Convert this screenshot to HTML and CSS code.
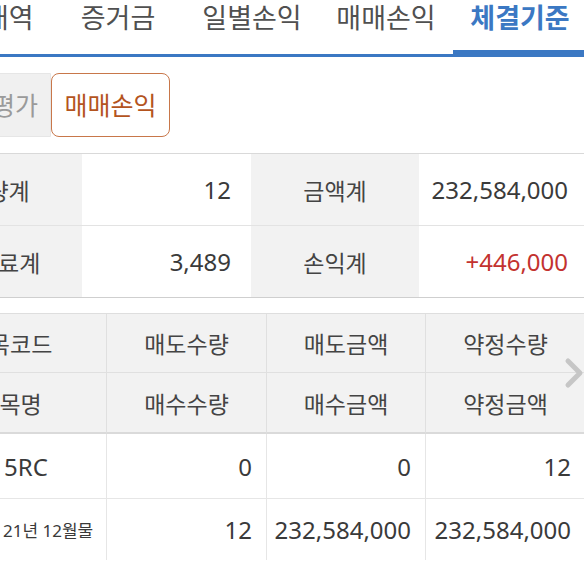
FILE: index.html
```html
<!DOCTYPE html>
<html lang="ko">
<head>
<meta charset="utf-8">
<link rel="stylesheet" href="styles.css">
</head>
<body>
<div class="viewport">
  <div class="page">
    <nav class="tabs">
      <div class="tab">거래내역</div>
      <div class="tab">증거금</div>
      <div class="tab">일별손익</div>
      <div class="tab">매매손익</div>
      <div class="tab active">체결기준</div>
    </nav>

    <div class="segment">
      <div class="seg">잔고평가</div>
      <div class="seg on">매매손익</div>
    </div>

    <div class="summary">
      <div class="s-label">수량계</div>
      <div class="s-value">12</div>
      <div class="s-label">금액계</div>
      <div class="s-value">232,584,000</div>
      <div class="s-label last">수수료계</div>
      <div class="s-value last">3,489</div>
      <div class="s-label last">손익계</div>
      <div class="s-value last plus">+446,000</div>
    </div>

    <div class="grid">
      <div class="g-head">종목코드</div>
      <div class="g-head">매도수량</div>
      <div class="g-head">매도금액</div>
      <div class="g-head">약정수량</div>
      <div class="g-head h2">종목명</div>
      <div class="g-head h2">매수수량</div>
      <div class="g-head h2">매수금액</div>
      <div class="g-head h2">약정금액</div>

      <div class="g-cell name">5RC</div>
      <div class="g-cell">0</div>
      <div class="g-cell">0</div>
      <div class="g-cell">12</div>
      <div class="g-cell name small r2">21년 12월물</div>
      <div class="g-cell r2">12</div>
      <div class="g-cell r2">232,584,000</div>
      <div class="g-cell r2">232,584,000</div>
    </div>
  </div>

  <svg class="chevron" width="22" height="32" viewBox="0 0 22 32" aria-hidden="true">
    <polyline points="4,4 16,16 4,28" fill="none" stroke="#c6c6c6" stroke-width="5" stroke-linecap="round" stroke-linejoin="round"/>
  </svg>
</div>
</body>
</html>
```

FILE: styles.css
```css
* { box-sizing: border-box; }

html, body {
  margin: 0;
  padding: 0;
  background: #ffffff;
}

body {
  font-family: "Noto Sans", "Noto Sans CJK KR", sans-serif;
  color: #3a3a3a;
}

.viewport {
  position: relative;
  width: 584px;
  height: 562px;
  overflow: hidden;
}

.page {
  margin-left: -86px;
  width: 760px;
}

/* Tabs */
.tabs {
  display: flex;
  margin-left: 3px;
  border-bottom: 3px solid #3b78c3;
  width: 760px;
}

.tab {
  flex: 0 0 134px;
  height: 54px;
  padding-bottom: 18px;
  line-height: 36px;
  text-align: center;
  font-size: 27px;
  color: #505050;
  white-space: nowrap;
}

.tab.active {
  color: #3b78c3;
  font-weight: 700;
  box-shadow: inset 0 -4px 0 #3b78c3;
}

/* Segment buttons */
.segment {
  display: flex;
  margin-top: 16px;
  margin-left: 19px;
}

.seg {
  height: 64px;
  line-height: 62px;
  padding: 0 8px;
  font-size: 25px;
  color: #9a9a9a;
  background: #f0f0f0;
  border: 1px solid #e6e6e6;
  border-radius: 8px 0 0 8px;
  width: 118px;
  text-align: center;
  white-space: nowrap;
}

.seg.on {
  width: 119px;
  color: #b4541e;
  background: #ffffff;
  border: 1.5px solid #c8774a;
  border-radius: 8px;
}

/* Summary table */
.summary {
  display: grid;
  grid-template-columns: 168px 169px 168px 169px;
  margin-top: 16px;
  border-top: 1px solid #d9d9d9;
  border-bottom: 1px solid #cfcfcf;
}

.s-label,
.s-value {
  height: 72px;
  display: flex;
  align-items: center;
  font-size: 23px;
  border-bottom: 1px solid #e3e3e3;
}

.s-label.last,
.s-value.last {
  border-bottom: none;
  height: 71px;
}

.s-label {
  justify-content: center;
  background: #f2f2f2;
  color: #444444;
}

.s-value {
  justify-content: flex-end;
  padding-right: 20px;
  font-size: 24px;
  color: #3a3a3a;
}

.s-value.plus {
  color: #c3322f;
}

/* Detail grid */
.grid {
  display: grid;
  grid-template-columns: 193px 160px 159px 160px;
  margin-top: 15px;
  border-top: 1px solid #dedede;
}

.g-head {
  height: 59px;
  display: flex;
  align-items: center;
  justify-content: center;
  background: #f2f2f2;
  font-size: 23px;
  color: #444444;
  border-right: 1px solid #e0e0e0;
  border-bottom: 1px solid #e0e0e0;
  white-space: nowrap;
}

.g-head.h2 {
  height: 61px;
  border-bottom: 2px solid #dadada;
}

.g-cell {
  height: 65px;
  display: flex;
  align-items: center;
  justify-content: flex-end;
  padding-right: 14px;
  font-size: 24px;
  color: #3a3a3a;
  border-right: 1px solid #e6e6e6;
  border-bottom: 1px solid #e6e6e6;
  white-space: nowrap;
}

.g-cell.r2 {
  height: 61px;
  border-bottom: none;
}

.g-cell.name {
  justify-content: flex-start;
  padding-left: 90px;
  padding-right: 0;
}

.g-cell.small {
  font-size: 17px;
  padding-left: 89px;
}

.chevron {
  position: absolute;
  left: 564px;
  top: 357px;
}
```
